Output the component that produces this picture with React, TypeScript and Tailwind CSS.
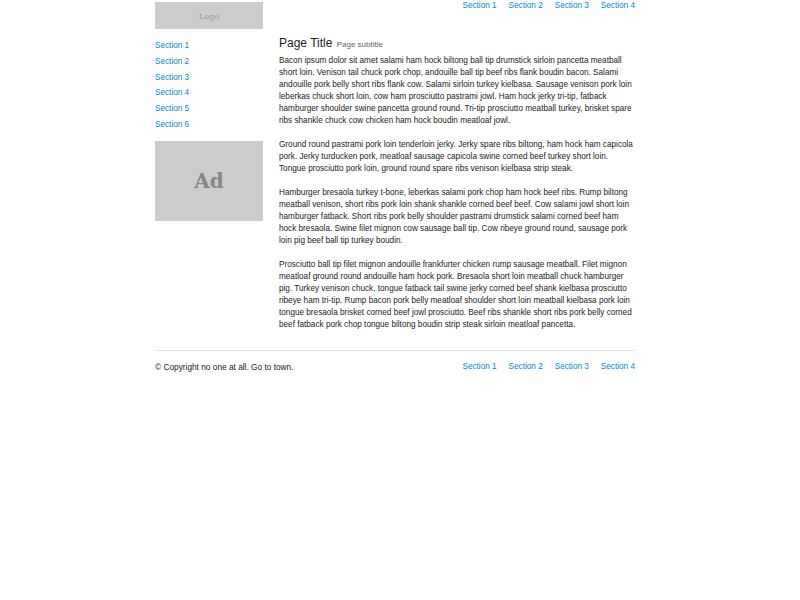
const sections = ['Section 1', 'Section 2', 'Section 3', 'Section 4'];
const sideLinks = ['Section 1', 'Section 2', 'Section 3', 'Section 4', 'Section 5', 'Section 6'];

const paragraphs = [
	'Bacon ipsum dolor sit amet salami ham hock biltong ball tip drumstick sirloin pancetta meatball short loin. Venison tail chuck pork chop, andouille ball tip beef ribs flank boudin bacon. Salami andouille pork belly short ribs flank cow. Salami sirloin turkey kielbasa. Sausage venison pork loin leberkas chuck short loin, cow ham prosciutto pastrami jowl. Ham hock jerky tri-tip, fatback hamburger shoulder swine pancetta ground round. Tri-tip prosciutto meatball turkey, brisket spare ribs shankle chuck cow chicken ham hock boudin meatloaf jowl.',
	'Ground round pastrami pork loin tenderloin jerky. Jerky spare ribs biltong, ham hock ham capicola pork. Jerky turducken pork, meatloaf sausage capicola swine corned beef turkey short loin. Tongue prosciutto pork loin, ground round spare ribs venison kielbasa strip steak.',
	'Hamburger bresaola turkey t-bone, leberkas salami pork chop ham hock beef ribs. Rump biltong meatball venison, short ribs pork loin shank shankle corned beef beef. Cow salami jowl short loin hamburger fatback. Short ribs pork belly shoulder pastrami drumstick salami corned beef ham hock bresaola. Swine filet mignon cow sausage ball tip. Cow ribeye ground round, sausage pork loin pig beef ball tip turkey boudin.',
	'Prosciutto ball tip filet mignon andouille frankfurter chicken rump sausage meatball. Filet mignon meatloaf ground round andouille ham hock pork. Bresaola short loin meatball chuck hamburger pig. Turkey venison chuck, tongue fatback tail swine jerky corned beef shank kielbasa prosciutto ribeye ham tri-tip. Rump bacon pork belly meatloaf shoulder short loin meatball kielbasa pork loin tongue bresaola brisket corned beef jowl prosciutto. Beef ribs shankle short ribs pork belly corned beef fatback pork chop tongue biltong boudin strip steak sirloin meatloaf pancetta.'
];

function NavLinks() {
	return (
		<nav className="flex gap-3 text-[8.2px] leading-[10px]">
			{sections.map((s) => (
				<a key={s} href="#" className="text-[#0088cc]">{s}</a>
			))}
		</nav>
	);
}

export default function App() {
	return (
		<div className="min-h-[600px] bg-white font-['Liberation_Sans',Arial,sans-serif] text-[#222]">
			<div className="w-[480px] ml-[155px]">
				<header className="flex justify-between items-start">
					<div className="w-[108px] h-[27px] mt-[2px] pt-[2px] bg-[#cccccc] flex items-center justify-center font-['DejaVu_Serif',serif] text-[8px] text-[#999]">
						Logo
					</div>
					<div className="pt-px">
						<NavLinks/>
					</div>
				</header>

				<div className="flex gap-4 mt-[9px]">
					<aside className="w-[108px] shrink-0">
						<ul className="text-[8.2px] leading-[15.8px]">
							{sideLinks.map((s) => (
								<li key={s}><a href="#" className="text-[#0088cc]">{s}</a></li>
							))}
						</ul>
						<div className="mt-[8px] h-[80px] bg-[#cccccc] flex items-center justify-center font-['DejaVu_Serif',serif] text-[20px] font-bold text-[#888]">
							Ad
						</div>
					</aside>

					<main className="flex-1 -mt-px">
						<h1 className="text-[12px] leading-[12px] mb-[6px]">
							Page Title <small className="ml-px text-[8px] leading-none text-[#666]">Page subtitle</small>
						</h1>
						{paragraphs.map((p, i) => (
							<p key={i} className="text-[8.2px] leading-[12px] mb-3">{p}</p>
						))}
					</main>
				</div>

				<footer className="mt-[7px] border-t border-[#e5e5e5] pt-[11px] flex justify-between text-[8.3px] leading-[10px]">
					<span>© Copyright no one at all. Go to town.</span>
					<NavLinks/>
				</footer>
			</div>
		</div>
	);
}
